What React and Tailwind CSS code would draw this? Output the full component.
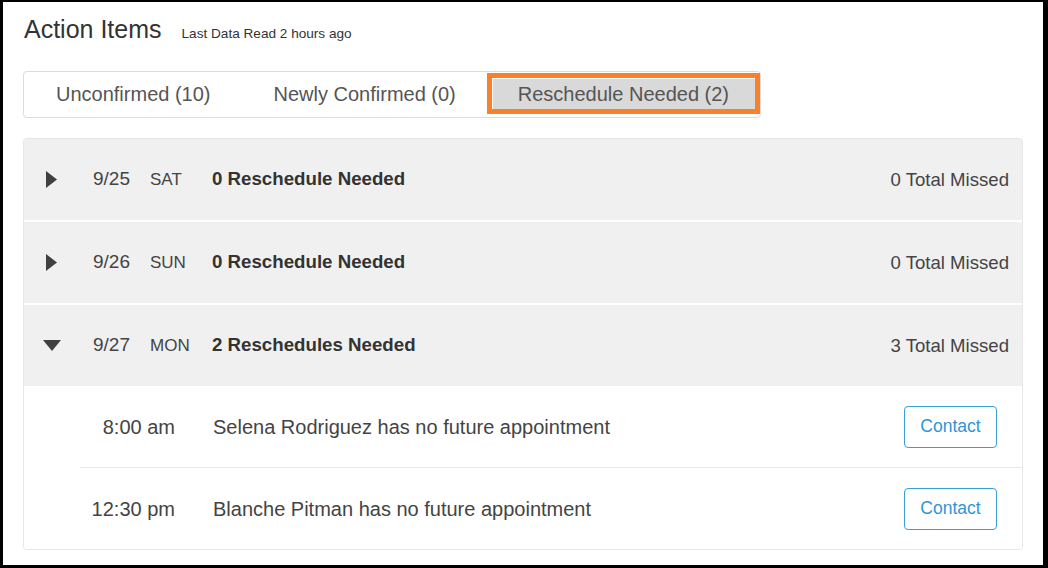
import React from 'react';

const days = [
  { date: '9/25', day: 'SAT', label: '0 Reschedule Needed', missed: '0 Total Missed', open: false },
  { date: '9/26', day: 'SUN', label: '0 Reschedule Needed', missed: '0 Total Missed', open: false },
  { date: '9/27', day: 'MON', label: '2 Reschedules Needed', missed: '3 Total Missed', open: true },
];

const items = [
  { time: '8:00 am', text: 'Selena Rodriguez has no future appointment' },
  { time: '12:30 pm', text: 'Blanche Pitman has no future appointment' },
];

const Caret = ({ open }) =>
  open ? (
    <svg width="18" height="11" viewBox="0 0 18 11" className="ml-[-3px]">
      <path d="M0 0 L18 0 L9 11 Z" fill="#404040" />
    </svg>
  ) : (
    <svg width="11" height="17" viewBox="0 0 11 17">
      <path d="M0 0 L11 8.5 L0 17 Z" fill="#404040" />
    </svg>
  );

const Tab = ({ children, active }) => (
  <button
    className={
      active
        ? 'h-[41px] pl-[26px] pr-[26px] border-[5px] border-[#f7822b] bg-[#d9d9d9] shadow-[inset_1px_1px_0_#ffffff] text-[20px] text-[#555555] leading-none'
        : 'h-[41px] pl-[27px] pr-[26px] border-[5px] border-transparent text-[20px] text-[#555555] leading-none'
    }
  >
    {children}
  </button>
);

export default function App() {
  return (
    <div
      className="w-[1048px] h-[568px] overflow-hidden bg-white border-black border-t-2 border-l-[3px] border-r-[5px] border-b-[3px] pl-[20px] pr-[20px] pt-[13px]"
      style={{ fontFamily: '"Liberation Sans", Arial, sans-serif' }}
    >
      <div className="flex items-baseline h-[28px] leading-[28px]">
        <h1 className="text-[25px] text-[#333333] ml-[1px]">Action Items</h1>
        <span className="ml-[20px] text-[13.6px] text-[#333333]">Last Data Read 2 hours ago</span>
      </div>

      <div className="mt-[28px] inline-flex items-start pt-[1px] pb-[3px] border border-[#dcdcdc] rounded-[4px]">
        <Tab>Unconfirmed (10)</Tab>
        <Tab>Newly Confirmed (0)</Tab>
        <Tab active>Reschedule Needed (2)</Tab>
      </div>

      <div className="mt-[20px] border border-[#e6e6e6] rounded-[4px] overflow-hidden flex flex-col gap-[2px]">
        {days.map((d) => (
          <div key={d.date} className="flex flex-col">
            <div className="h-[81px] bg-[#f0f0f0] flex items-center">
              <div className="w-[69px] pl-[22px] flex items-center">
                <Caret open={d.open} />
              </div>
              <div className="w-[57px] text-[19px] text-[#444444]">{d.date}</div>
              <div className="w-[62px] text-[17px] text-[#444444]">{d.day}</div>
              <div className="flex-1 text-[18.7px] font-bold text-[#333333]">{d.label}</div>
              <div className="pr-[13px] text-[18.6px] text-[#444444]">{d.missed}</div>
            </div>
            {d.open && (
              <div className="flex flex-col bg-white">
                {items.map((it, i) => (
                  <div
                    key={it.time}
                    className={
                      i === 0
                        ? 'ml-[56px] h-[82px] flex items-center border-b border-[#e9e9e9]'
                        : 'ml-[56px] h-[81px] flex items-center'
                    }
                  >
                    <div className="w-[95px] text-right text-[20px] text-[#444444]">{it.time}</div>
                    <div className="flex-1 pl-[38px] text-[20px] text-[#444444]">{it.text}</div>
                    <button className="mr-[25px] w-[93px] h-[42px] border border-[#3a9edb] rounded-[4px] text-[17.5px] text-[#2f95d6]">
                      Contact
                    </button>
                  </div>
                ))}
              </div>
            )}
          </div>
        ))}
      </div>
    </div>
  );
}
